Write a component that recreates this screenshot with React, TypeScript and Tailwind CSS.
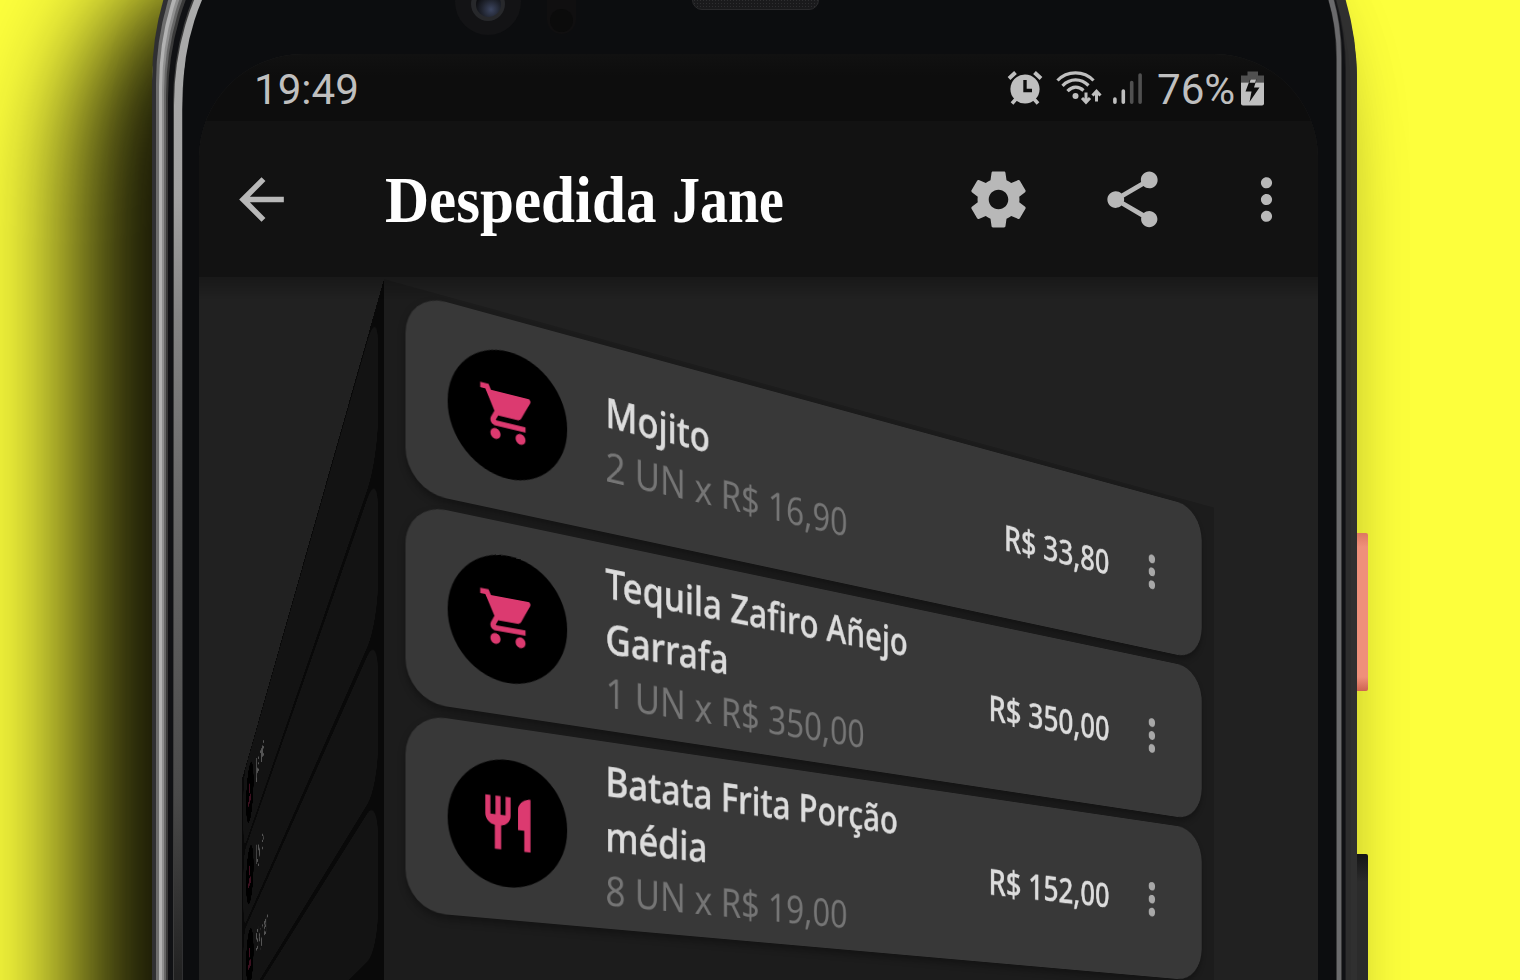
import type { ReactNode } from "react";
import { MdArrowBack, MdMoreVert, MdPerson, MdRestaurant, MdShare, MdShoppingCart } from "react-icons/md";

type Item = { icon: "cart" | "food"; lines: string[]; detail: string; total: string };

const items: Item[] = [
  { icon: "cart", lines: ["Mojito"], detail: "2 UN x R$ 16,90", total: "R$ 33,80" },
  { icon: "cart", lines: ["Tequila Zafiro Añejo", "Garrafa"], detail: "1 UN x R$ 350,00", total: "R$ 350,00" },
  { icon: "food", lines: ["Batata Frita Porção", "média"], detail: "8 UN x R$ 19,00", total: "R$ 152,00" },
];

const people = ["Jane", "Lyle", "Skyler", ""];

/* Metal rim, from the outer edge inwards */
const rim = [
  "rounded-t-[150px_210px] bg-[#303032] pl-[4px] pt-[3px] pr-0",
  "rounded-t-[150px_210px] bg-[linear-gradient(90deg,#6e6e6e_50%,#303030_50%)] pl-[3px] pt-[3px]",
  "rounded-t-[150px_210px] bg-[linear-gradient(90deg,#b2b2b2_50%,#303030_50%)] pl-[3px] pt-[3px]",
  "rounded-t-[150px_210px] bg-[linear-gradient(90deg,#8f8f8f_50%,#303030_50%)] pl-[2px] pt-[3px] pr-[6px]",
  "rounded-t-[150px_210px] bg-[linear-gradient(90deg,#666666_50%,#2d2d2d_50%)] pl-[2px] pt-[3px] pr-[5px]",
  "rounded-tl-[150px_210px] rounded-tr-[130px_185px] bg-[linear-gradient(90deg,#3a3a3a_50%,#1c1c1e_50%)] pl-[2px] pt-[4px] pr-[1px]",
  "rounded-tl-[150px_210px] rounded-tr-[130px_180px] bg-[#101114] pl-[5px] pt-[4px] pr-[3px]",
  "rounded-tl-[150px_210px] rounded-tr-[120px_165px] bg-[linear-gradient(90deg,#3c3c3c_50%,#3a3a3a_50%)] pl-[1px] pt-[2px] pr-[1px]",
  "rounded-tl-[150px_210px] rounded-tr-[120px_160px] bg-[linear-gradient(90deg,transparent_50%,#6a6a6c_50%),linear-gradient(180deg,#b0b0b0_0,#a2a2a2_300px,#858585_420px,#6a6a6a_600px,#4a4a4a_900px,#222_1080px)] pl-[8px] pt-[4px] pr-[4px]",
  "rounded-tl-[150px_210px] rounded-tr-[120px_160px] bg-[linear-gradient(90deg,#303032_50%,#3a3a3a_50%)] pl-[1px] pt-[1px] pr-[1px]",
];

function Rim({ children }: { children: ReactNode }) {
  return (
    <>
      {rim.reduceRight<ReactNode>(
        (inner, cls) => (
          <div className={`flex h-full w-full ${cls}`}>{inner}</div>
        ),
        children,
      )}
    </>
  );
}

function Gear() {
  return (
    <svg viewBox="0 0 24 24" className="size-[67px]" fill="currentColor">
      <path d="M19.43 12.98c.04-.32.07-.64.07-.98s-.03-.66-.07-.98l2.11-1.65c.19-.15.24-.42.12-.64l-2-3.46c-.12-.22-.39-.3-.61-.22l-2.49 1c-.52-.4-1.08-.73-1.69-.98l-.38-2.65C14.46 2.18 14.25 2 14 2h-4c-.25 0-.46.18-.49.42l-.38 2.65c-.61.25-1.17.59-1.69.98l-2.49-1c-.23-.09-.49 0-.61.22l-2 3.46c-.13.22-.07.49.12.64l2.11 1.65c-.04.32-.07.65-.07.98s.03.66.07.98l-2.11 1.65c-.19.15-.24.42-.12.64l2 3.46c.12.22.39.3.61.22l2.49-1c.52.4 1.08.73 1.69.98l.38 2.65c.03.24.24.42.49.42h4c.25 0 .46-.18.49-.42l.38-2.65c.61-.25 1.17-.59 1.69-.98l2.49 1c.23.09.49 0 .61-.22l2-3.46c.12-.22.07-.49-.12-.64l-2.11-1.65zM12 15.5c-1.93 0-3.5-1.57-3.5-3.5s1.57-3.5 3.5-3.5 3.5 1.57 3.5 3.5-1.57 3.5-3.5 3.5z" />
    </svg>
  );
}

function Alarm() {
  return (
    <svg viewBox="0 0 36 36" className="h-[36px] w-[36px]" fill="none" stroke="currentColor">
      <path d="M2 8.5 8.5 2.5M34 8.5 27.5 2.5" strokeWidth="4" />
      <path d="M5 33.5 9 29M31 33.5 27 29" strokeWidth="3.6" />
      <circle cx="18" cy="19" r="14.6" fill="currentColor" stroke="none" />
      <path d="M18 10v10.5h7" stroke="#0e0e0e" strokeWidth="3.4" />
    </svg>
  );
}

function Wifi() {
  return (
    <svg viewBox="0 0 46 36" className="h-[36px] w-[46px]" fill="none" stroke="currentColor">
      <path d="M1.5 10.5C11 .2 28 .2 37.5 10.5" strokeWidth="3.2" />
      <path d="M6.500 15.800C14 8 25 8 32.500 15.500" strokeWidth="3.2" />
      <path d="M11.500 21.200C16.500 16 22.500 16 27.500 20.500" strokeWidth="3.2" />
      <circle cx="19.500" cy="26" r="3" fill="currentColor" stroke="none" />
      <path d="M30 22.500v9M26 28l4 4.300 4-4.300M40.500 31.500v-9M36.500 25.500l4-4.300 4 4.300" strokeWidth="3" />
    </svg>
  );
}

function Signal() {
  return (
    <svg viewBox="0 0 29 36" className="h-[36px] w-[29px]" stroke="currentColor" strokeWidth="3.6" strokeLinecap="round">
      <path d="M1.900 29v3.200M10.300 21v11.200" />
      <path d="M18.700 12.500v19.700M27.100 5v27.200" stroke="#505050" />
    </svg>
  );
}

function Battery() {
  return (
    <svg viewBox="0 0 24 36" className="h-[36px] w-[24px]">
      <path d="M6.500 1.500h10.500v4H23v7H0v-7h6.500z" fill="#505050" />
      <path d="M0 12.500h23v21q0 2-2 2H2q-2 0-2-2z" fill="currentColor" />
      <path d="M9 9.500h6.500l-2.500 8h5.500L8.500 32l2-10.500H4.500z" fill="#0e0e0e" />
      <path d="M9.600 9.500h5.500l-1 3.200H8.500z" fill="currentColor" />
    </svg>
  );
}

function StatusBar() {
  return (
    <div className="flex h-[67px] shrink-0 items-center bg-[linear-gradient(180deg,#111_0,#0d0d0d_22px)] pl-[55px] font-['Roboto',sans-serif] text-[43px] leading-none text-[#bfbfbf]">
      <span className="w-[110px] origin-left scale-x-[.98] pt-[4px]">19:49</span>
      <div className="ml-auto flex items-center pr-[53px]">
        <Alarm />
        <span className="ml-[13px] flex"><Wifi /></span>
        <span className="ml-[11px] flex"><Signal /></span>
        <span className="mr-[4px] ml-[15px] w-[80px] origin-left scale-x-[.98] pt-[4px] whitespace-nowrap">76%</span>
        <Battery />
      </div>
    </div>
  );
}

function AppBar() {
  return (
    <header className="flex h-[156px] shrink-0 items-center bg-[#121212] pr-[18px] pl-[29px] text-[#b8b8b8]">
      <MdArrowBack className="size-[67px] shrink-0" />
      <h1 className="ml-[90px] flex pt-[3px] font-['Liberation_Serif',serif] text-[65px] leading-none font-bold text-white">
        <span className="w-[287px] origin-left scale-x-[.94]">Despedida</span>
        <span className="origin-left scale-x-[.86]">Jane</span>
      </h1>
      <div className="ml-auto flex gap-[67px]">
        <Gear />
        <MdShare className="size-[67px]" />
        <MdMoreVert className="size-[67px]" />
      </div>
    </header>
  );
}

function ItemCard({ item }: { item: Item }) {
  const Icon = item.icon === "cart" ? MdShoppingCart : MdRestaurant;
  return (
    <div className="flex h-[200.5px] items-center rounded-[42px] bg-[#383838] pr-[53px] pl-[43.5px] text-[44px] text-[#dcdcdc] shadow-[0_5px_8px_rgba(0,0,0,.3)]">
      <div className="flex size-[131.5px] shrink-0 items-center justify-center rounded-full bg-black">
        <Icon className="size-[66px] text-[#dc3a70]" />
      </div>
      <div className="ml-[43.5px] origin-left scale-x-[.935] pb-[1px] whitespace-nowrap">
        {item.lines.map((l) => (
          <div key={l} className="leading-[59px] font-medium [-webkit-text-stroke:.6px_#dcdcdc]">{l}</div>
        ))}
        <div className="origin-left scale-x-[1.006] leading-[57px] text-[#757575]">{item.detail}</div>
      </div>
      <div className="ml-auto origin-right scale-x-[.945] pt-[1px] leading-[60px] font-medium whitespace-nowrap [-webkit-text-stroke:.5px_#dcdcdc]">{item.total}</div>
      <MdMoreVert className="ml-[38px] size-[67px] shrink-0 text-[#a8a8a8]" />
    </div>
  );
}

function ItemsFace() {
  return (
    <div className="absolute top-[2px] left-[185px] flex h-[1500px] w-[1120px] origin-top-left [transform:matrix3d(.9834,.2707,0,.000292,0,1,0,0,0,0,1,0,0,0,0,1)] flex-col gap-[11.5px] bg-[#1c1c1c] px-[22px] pt-[5.5px]">
      {items.map((item) => (
        <ItemCard key={item.detail} item={item} />
      ))}
    </div>
  );
}

function PeopleFace() {
  return (
    <div className="absolute top-[2px] left-[-935px] flex h-[1500px] w-[1120px] origin-top-right [transform:matrix3d(.275,-.9687,0,-.001045,0,1,0,0,0,0,1,0,0,0,0,1)] flex-col gap-[10px] bg-[#090909] px-[22.5px] pt-[4px]">
      {people.map((name, i) => (
        <div key={i} className="flex h-[158px] shrink-0 items-center rounded-[42px] bg-[#131313] pl-[43px] text-[52px] leading-none text-[#555]">
          <div className="flex size-[114px] items-center justify-center rounded-full bg-black">
            <MdPerson className="size-[62px] text-[#3d1020]" />
          </div>
          {name && <span className="ml-[36px] pb-[14px] font-medium">{name}</span>}
        </div>
      ))}
    </div>
  );
}

function Hardware() {
  return (
    <>
      <div className="absolute top-[-31px] left-[455px] flex size-[66px] items-center justify-center rounded-full bg-[#131315]">
        <div className="mt-[4px] flex size-[34px] items-center justify-center rounded-full bg-[#27282b]">
          <div className="size-[25px] rounded-full bg-[radial-gradient(circle_at_60%_70%,#3c4560_0,#20242f_40%,#0a0a0c_75%)]" />
        </div>
      </div>
      <div className="absolute top-[-30px] left-[547px] h-[64px] w-[29px] rounded-full bg-[#100f10]">
        <div className="absolute bottom-[2px] left-[3px] size-[23px] rounded-full bg-[#0b0b0b]" />
      </div>
      <div className="absolute top-[-20px] left-[692px] h-[30px] w-[127px] rounded-[10px] border border-[#2a2a2c] bg-[#1a1a1c] bg-[radial-gradient(#2e2e30_28%,transparent_30%)] bg-[size:3px_3px]" />
      <div className="absolute top-[533px] left-[1357px] h-[158px] w-[11px] rounded-r-[2px] bg-[linear-gradient(180deg,#dd7862_0,#ef907a_14px,#ef907a_144px,#cc6450_158px)]" />
      <div className="absolute top-[854px] left-[1357px] h-[200px] w-[11px] rounded-r-[2px] bg-[linear-gradient(180deg,#151516_0,#2b2b2b_28px)]" />
    </>
  );
}

export default function App() {
  return (
    <div className="relative flex h-[980px] w-[1520px] overflow-hidden bg-[#fdff3c] font-['Noto_Sans',sans-serif]">
      <div className="relative mt-[-130px] ml-[152px] h-[1300px] w-[1205px] shrink-0 rounded-t-[150px_220px] shadow-[-78px_100px_110px_rgba(0,0,0,.93),0_50px_60px_rgba(0,0,0,.12)]">
        <Rim>
          <div className="flex w-full flex-col rounded-tl-[150px_195px] rounded-tr-[120px_155px] bg-[#0c0d0f] pt-[154px] pr-[18px] pl-[16px]">
            <main className="flex h-[1000px] w-full flex-col overflow-hidden rounded-t-[104px] bg-[#212121]">
              <StatusBar />
              <AppBar />
              <section className="relative grow overflow-hidden">
                <PeopleFace />
                <ItemsFace />
                <div className="absolute inset-x-0 top-0 h-[22px] bg-linear-to-b from-black/25 to-transparent" />
              </section>
            </main>
          </div>
        </Rim>
      </div>
      <Hardware />
    </div>
  );
}
